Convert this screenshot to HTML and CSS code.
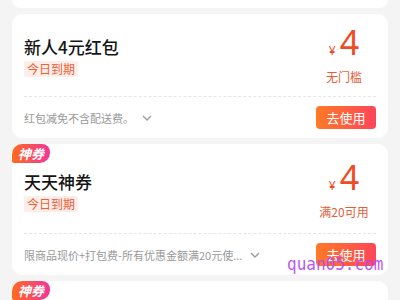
FILE: index.html
```html
<!DOCTYPE html>
<html lang="zh-CN">
<head>
<meta charset="utf-8">
<link rel="stylesheet" href="styles.css">
</head>
<body>
<div class="list">
  <div class="card card-stub"></div>

  <div class="card">
    <div class="card-main">
      <div class="info">
        <div class="title">新人4元红包</div>
        <span class="tag">今日到期</span>
      </div>
      <div class="amount">
        <div class="price"><span class="yen">¥</span><span class="num">4</span></div>
        <div class="cond">无门槛</div>
      </div>
    </div>
    <div class="card-foot">
      <div class="desc"><span class="desc-text">红包减免不含配送费。</span><svg class="chev" width="10" height="6" viewBox="0 0 10 6"><path d="M1 1l4 4 4-4" fill="none" stroke="#9a9a9a" stroke-width="1.3"/></svg></div>
      <button class="use">去使用</button>
    </div>
  </div>

  <div class="card card-god">
    <span class="badge">神券</span>
    <div class="card-main">
      <div class="info">
        <div class="title">天天神券</div>
        <span class="tag">今日到期</span>
      </div>
      <div class="amount">
        <div class="price"><span class="yen">¥</span><span class="num">4</span></div>
        <div class="cond">满20可用</div>
      </div>
    </div>
    <div class="card-foot">
      <div class="desc"><span class="desc-text">限商品现价+打包费-所有优惠金额满20元使...</span><svg class="chev" width="10" height="6" viewBox="0 0 10 6"><path d="M1 1l4 4 4-4" fill="none" stroke="#9a9a9a" stroke-width="1.3"/></svg></div>
      <button class="use">去使用</button>
    </div>
    <div class="watermark">quan05.com</div>
  </div>

  <div class="card card-god card-next">
    <span class="badge">神券</span>
  </div>
</div>
</body>
</html>
```
FILE: styles.css
```css
* { box-sizing: border-box; }
html, body {
  margin: 0;
  padding: 0;
  background: #f4f4f4;
  font-family: "Noto Sans CJK SC", "Noto Sans", sans-serif;
  width: 400px;
  height: 300px;
  overflow: hidden;
}
.list {
  display: flex;
  flex-direction: column;
  gap: 6px;
  padding: 0 12px;
}
.card {
  position: relative;
  background: #fff;
  border-radius: 10px;
  padding: 0 12px;
}
.card-stub {
  height: 8px;
  border-radius: 0 0 10px 10px;
}
.card-main {
  display: flex;
  justify-content: space-between;
  height: 83px;
  padding-top: 21px;
  border-bottom: 1px dashed #e6e6e6;
}
.card-god .card-main {
  height: 90px;
  padding-top: 26px;
}
.info {
  display: flex;
  flex-direction: column;
  align-items: flex-start;
}
.title {
  font-size: 17px;
  line-height: 23px;
  font-weight: 500;
  color: #151515;
}
.tag {
  margin-top: 3px;
  font-size: 12px;
  line-height: 16px;
  padding: 0 3px;
  border-radius: 2px;
  background: #fdeee9;
  color: #ef5e37;
}
.amount {
  width: 64px;
  margin-top: -11px;
  display: flex;
  flex-direction: column;
  align-items: center;
}
.price {
  display: flex;
  align-items: baseline;
  color: #ef4b25;
  line-height: 36px;
}
.yen {
  font-size: 12px;
  margin-right: 4px;
  font-family: "Noto Sans", sans-serif;
}
.num {
  font-size: 34px;
  font-family: "Noto Sans", sans-serif;
  font-weight: 400;
}
.cond {
  font-size: 12px;
  line-height: 16px;
  color: #e4603c;
  white-space: nowrap;
}
.card-foot {
  display: flex;
  align-items: center;
  justify-content: space-between;
  height: 41px;
}
.desc {
  display: flex;
  align-items: center;
  gap: 6px;
  font-size: 11px;
  color: #999;
  min-width: 0;
}
.desc-text {
  white-space: nowrap;
}
.chev { flex: none; margin-left: 2px; }
.use {
  width: 60px;
  height: 23px;
  border: 0;
  border-radius: 4px;
  background: linear-gradient(90deg, #ff7a26, #ff4559);
  color: #fff;
  font-size: 13px;
  font-family: "Noto Sans CJK SC", sans-serif;
  padding: 0;
}
.badge {
  position: absolute;
  left: 0;
  top: 0;
  width: 38px;
  height: 19px;
  border-radius: 10px 8px 10px 2px;
  background: linear-gradient(90deg, #ff6b1c, #f2359b);
  color: #fff;
  font-size: 13px;
  line-height: 19px;
  font-weight: 700;
  font-style: italic;
  text-align: center;
}
.card-next { height: 40px; }
.watermark {
  position: absolute;
  left: 275px;
  top: 110px;
  font-family: "DejaVu Sans Mono", monospace;
  font-size: 16px;
  line-height: 20px;
  color: #b548f0;
  opacity: 0.9;
  white-space: nowrap;
  transform: scaleY(1.15);
}
```
